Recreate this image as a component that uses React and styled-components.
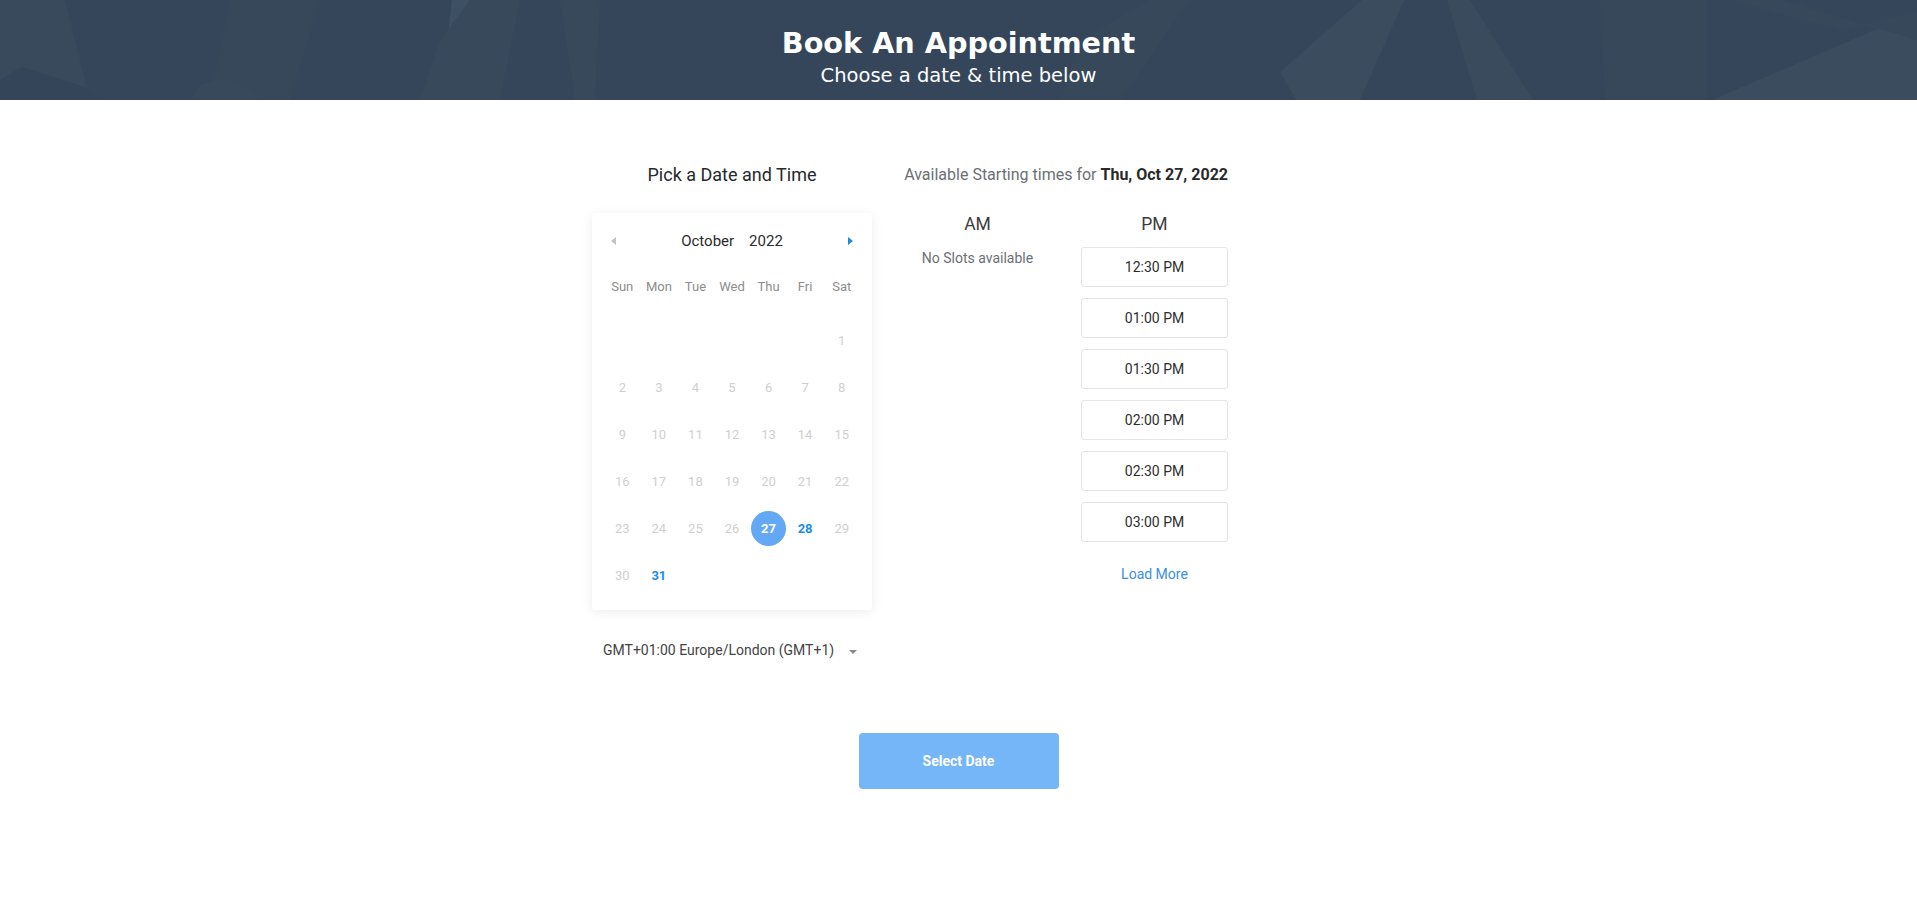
import React from 'react';
import styled, { createGlobalStyle } from 'styled-components';

const GlobalStyle = createGlobalStyle`
  html, body {
    margin: 0;
    padding: 0;
    background: #fff;
  }
  body {
    font-family: Roboto, "Liberation Sans", Arial, sans-serif;
    color: #333;
  }
`;

const Header = styled.header`
  position: relative;
  height: 100px;
  background: #35465a;
  overflow: hidden;
  display: flex;
  flex-direction: column;
  align-items: center;
  color: #fff;
`;

const Facets = styled.svg`
  position: absolute;
  inset: 0;
  width: 100%;
  height: 100%;
`;

const HeaderTitle = styled.h1`
  position: relative;
  margin: 26px 0 0;
  font-family: "DejaVu Sans", sans-serif;
  font-weight: 700;
  font-size: 28.7px;
  line-height: 34px;
`;

const HeaderSub = styled.p`
  position: relative;
  margin: 4px 0 0;
  font-family: "DejaVu Sans", sans-serif;
  font-weight: 400;
  font-size: 19.5px;
  line-height: 24px;
`;

const Page = styled.main`
  width: 733px;
  margin: 0 auto;
  padding-top: 65px;
`;

const Columns = styled.div`
  display: flex;
  align-items: flex-start;
  gap: 32px;
`;

const LeftColumn = styled.section`
  width: 280px;
  display: flex;
  flex-direction: column;
`;

const RightColumn = styled.section`
  width: 324px;
  display: flex;
  flex-direction: column;
`;

const ColumnTitle = styled.h2`
  margin: 0;
  font-size: ${p => (p.$small ? '16px' : '18px')};
  font-weight: 400;
  line-height: 20px;
  color: ${p => (p.$small ? '#6b6f75' : '#26282c')};
  text-align: ${p => (p.$small ? 'right' : 'center')};
  white-space: nowrap;

  b {
    color: #2a2a2a;
    font-weight: 700;
  }
`;

const Card = styled.div`
  margin-top: 28px;
  background: #fff;
  border-radius: 4px;
  box-shadow: 0 2px 12px rgba(0, 0, 0, 0.08);
  padding: 14px 12px 11px;
`;

const MonthBar = styled.div`
  height: 28px;
  display: flex;
  align-items: center;
  justify-content: space-between;
  padding: 0 7px;
`;

const Arrow = styled.span`
  width: 0;
  height: 0;
  border-top: 4px solid transparent;
  border-bottom: 4px solid transparent;
  ${p =>
    p.$dir === 'left'
      ? `border-right: 5px solid ${p.$active ? '#1e88e5' : '#c4c4c4'};`
      : `border-left: 5px solid ${p.$active ? '#1e88e5' : '#c4c4c4'};`}
`;

const MonthLabel = styled.div`
  display: flex;
  gap: 15px;
  font-size: 15px;
  color: #2b2b2b;
`;

const WeekRow = styled.div`
  margin-top: 16px;
  height: 30px;
  display: grid;
  grid-template-columns: repeat(7, 1fr);
  align-items: center;
  justify-items: center;
  font-size: 13px;
  color: #8d8d8d;
`;

const DaysGrid = styled.div`
  margin-top: 16px;
  display: grid;
  grid-template-columns: repeat(7, 1fr);
  grid-auto-rows: 47px;
  align-items: center;
  justify-items: center;
`;

const Day = styled.span`
  width: 35px;
  height: 35px;
  border-radius: 50%;
  display: flex;
  align-items: center;
  justify-content: center;
  font-size: 13px;
  font-weight: ${p => (p.$state === 'off' ? 400 : 700)};
  color: ${p =>
    p.$state === 'selected' ? '#fff' : p.$state === 'open' ? '#1b8fe6' : '#cfcfcf'};
  background: ${p => (p.$state === 'selected' ? '#63a8f4' : 'transparent')};
`;

const ZoneRow = styled.div`
  margin-top: 30px;
  height: 20px;
  display: flex;
  align-items: center;
  justify-content: space-between;
  padding: 0 15px 0 11px;
  font-size: 14px;
  color: #444;
`;

const Caret = styled.span`
  margin-top: 4px;
  width: 0;
  height: 0;
  border-left: 4px solid transparent;
  border-right: 4px solid transparent;
  border-top: 4px solid #8a8a8a;
`;

const SlotColumns = styled.div`
  margin-top: 28px;
  display: grid;
  grid-template-columns: 147px 147px;
  column-gap: 30px;
  align-items: start;
`;

const SlotColumn = styled.div`
  display: flex;
  flex-direction: column;
  align-items: stretch;
`;

const Period = styled.div`
  height: 22px;
  line-height: 22px;
  text-align: center;
  font-size: 17.5px;
  color: #3c3c3c;
  margin-bottom: ${p => (p.$tight ? '14px' : '12px')};
`;

const Empty = styled.div`
  text-align: center;
  font-size: 14px;
  line-height: 18px;
  color: #6b6f75;
`;

const SlotList = styled.div`
  display: flex;
  flex-direction: column;
  gap: 11px;
`;

const Slot = styled.button`
  height: 40px;
  box-sizing: border-box;
  border: 1px solid #e4e4e4;
  border-radius: 3px;
  background: #fff;
  font-family: Roboto, sans-serif;
  font-size: 14px;
  color: #2e2e2e;
  cursor: pointer;
`;

const LoadMore = styled.a`
  margin-top: 23px;
  text-align: center;
  font-size: 14px;
  line-height: 18px;
  color: #3a8fde;
  cursor: pointer;
`;

const ActionRow = styled.div`
  display: flex;
  justify-content: center;
  padding-top: 73px;
  padding-bottom: 80px;
`;

const SelectButton = styled.button`
  width: 200px;
  height: 56px;
  border: none;
  border-radius: 4px;
  background: #74b6f8;
  color: #fff;
  font-family: Roboto, sans-serif;
  font-size: 14px;
  font-weight: 700;
  cursor: pointer;
`;

const weekdays = ['Sun', 'Mon', 'Tue', 'Wed', 'Thu', 'Fri', 'Sat'];
const openDays = [28, 31];
const selectedDay = 27;
const pmSlots = ['12:30 PM', '01:00 PM', '01:30 PM', '02:00 PM', '02:30 PM', '03:00 PM'];

function dayState(d) {
  if (d === selectedDay) return 'selected';
  if (openDays.includes(d)) return 'open';
  return 'off';
}

function HeaderArt() {
  return (
    <Facets viewBox="0 0 1917 100" preserveAspectRatio="none">
      <polygon points="20,0 65,0 87,88 22,67 0,80 0,0" fill="#394a5d" />
      <polygon points="0,80 22,67 87,88 100,100 0,100" fill="#34455a" />
      <polygon points="230,0 320,0 290,100 210,100" fill="#37485b" />
      <polygon points="452,0 470,0 445,60" fill="#3e5064" />
      <polygon points="440,40 470,0 520,0 500,100 420,100" fill="#38495c" />
      <polygon points="560,0 600,0 595,100 575,100" fill="#38495c" />
      <polygon points="200,85 225,78 265,100 190,100" fill="#38495c" />
      <polygon points="1280,72 1362,0 1404,0 1360,100 1296,100" fill="#3b4c5f" />
      <polygon points="1447,0 1470,0 1533,100 1477,100" fill="#3a4b5e" />
      <polygon points="1600,0 1707,0 1707,100 1605,100" fill="#37485b" />
      <polygon points="1917,12 1917,100 1712,100" fill="#3b4c5f" />
      <polygon points="1730,0 1780,0 1917,40 1917,12 1840,30" fill="#37485b" />
      <polygon points="1080,40 1150,0 1190,0 1120,100 1060,100" fill="#37485b" />
    </Facets>
  );
}

export default function App() {
  const cells = [];
  for (let i = 0; i < 6; i++) cells.push(<span key={`b${i}`} />);
  for (let d = 1; d <= 31; d++) {
    cells.push(
      <Day key={d} $state={dayState(d)}>
        {d}
      </Day>
    );
  }

  return (
    <>
      <GlobalStyle />
      <Header>
        <HeaderArt />
        <HeaderTitle>Book An Appointment</HeaderTitle>
        <HeaderSub>Choose a date &amp; time below</HeaderSub>
      </Header>

      <Page>
        <Columns>
          <LeftColumn>
            <ColumnTitle>Pick a Date and Time</ColumnTitle>
            <Card>
              <MonthBar>
                <Arrow $dir="left" />
                <MonthLabel>
                  <span>October</span>
                  <span>2022</span>
                </MonthLabel>
                <Arrow $dir="right" $active />
              </MonthBar>
              <WeekRow>
                {weekdays.map(w => (
                  <span key={w}>{w}</span>
                ))}
              </WeekRow>
              <DaysGrid>{cells}</DaysGrid>
            </Card>
            <ZoneRow>
              <span>GMT+01:00 Europe/London (GMT+1)</span>
              <Caret />
            </ZoneRow>
          </LeftColumn>

          <RightColumn>
            <ColumnTitle $small>
              Available Starting times for <b>Thu, Oct 27, 2022</b>
            </ColumnTitle>
            <SlotColumns>
              <SlotColumn>
                <Period $tight>AM</Period>
                <Empty>No Slots available</Empty>
              </SlotColumn>
              <SlotColumn>
                <Period>PM</Period>
                <SlotList>
                  {pmSlots.map(s => (
                    <Slot key={s}>{s}</Slot>
                  ))}
                </SlotList>
                <LoadMore>Load More</LoadMore>
              </SlotColumn>
            </SlotColumns>
          </RightColumn>
        </Columns>

        <ActionRow>
          <SelectButton>Select Date</SelectButton>
        </ActionRow>
      </Page>
    </>
  );
}
